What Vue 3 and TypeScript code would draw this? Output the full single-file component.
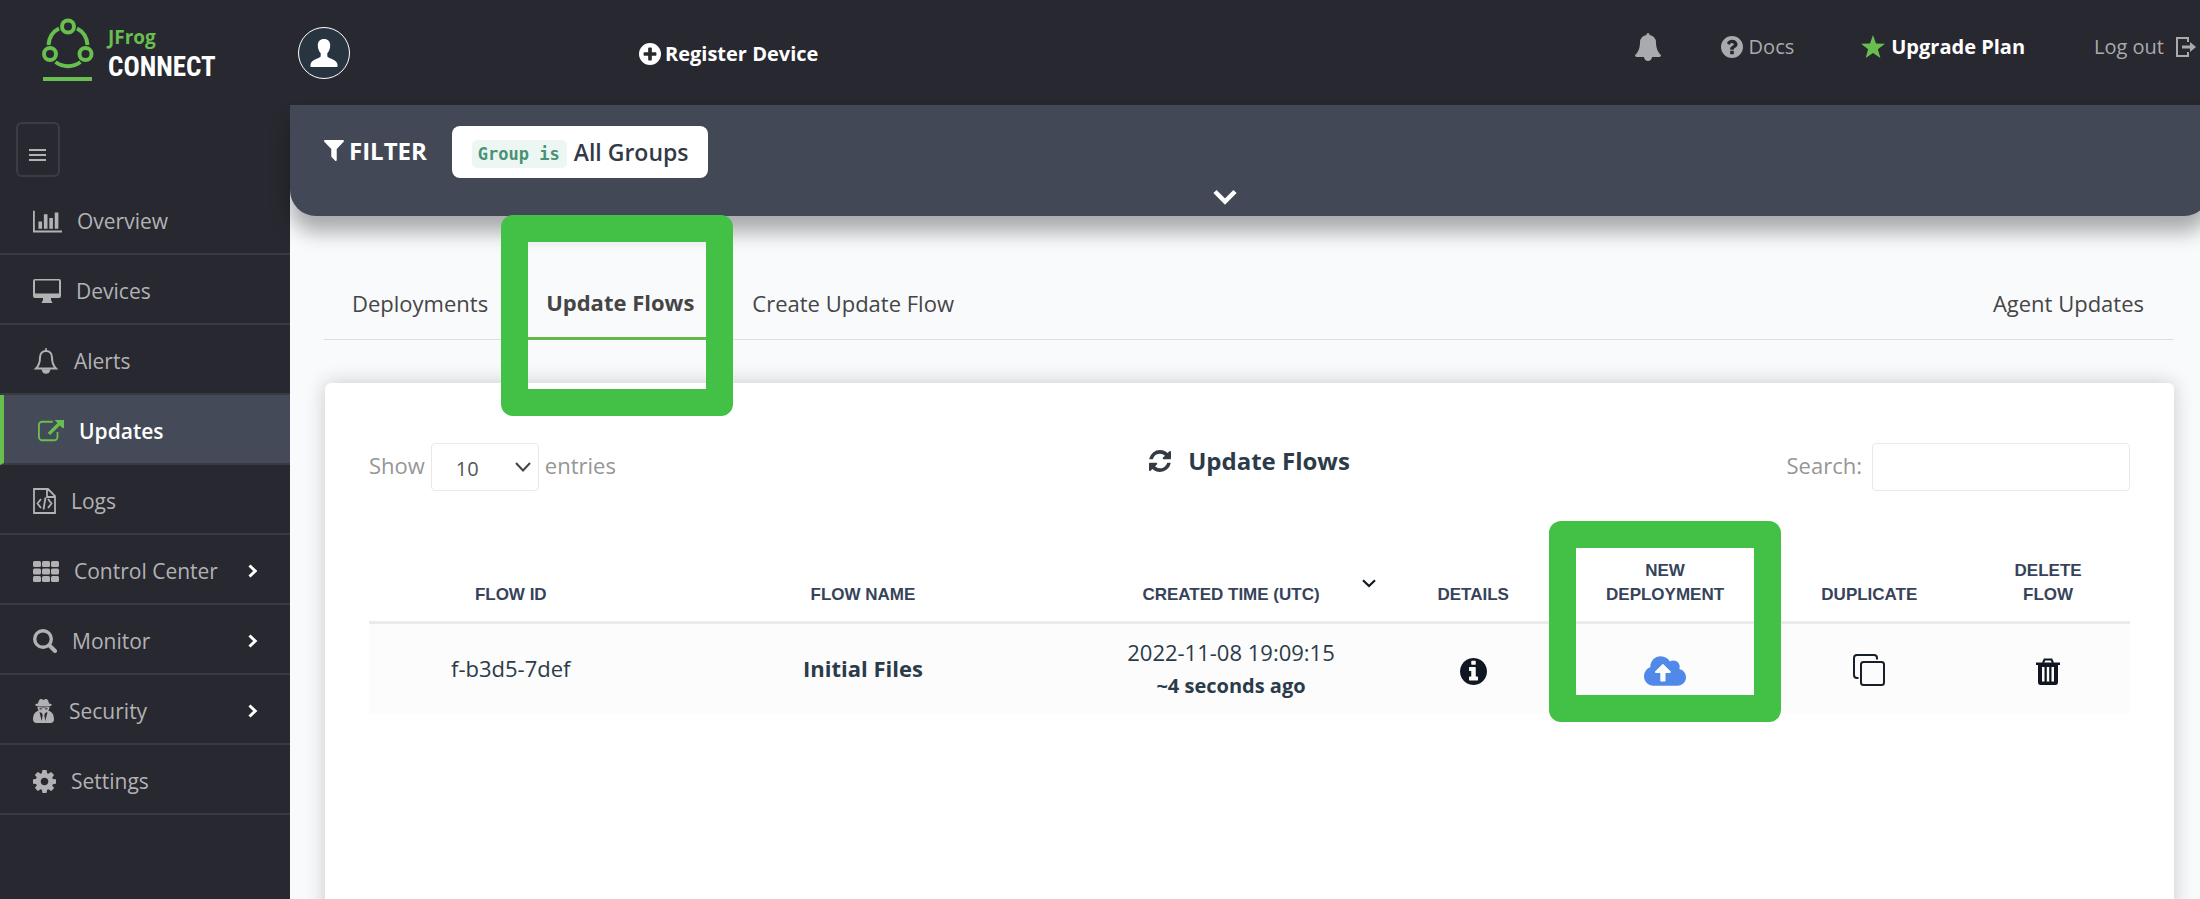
<script setup lang="ts">
import { ref } from 'vue'

interface NavItem {
  label: string
  icon: string
  expandable?: boolean
}

const navItems: NavItem[] = [
  { label: 'Overview', icon: 'chart' },
  { label: 'Devices', icon: 'desktop' },
  { label: 'Alerts', icon: 'bell' },
  { label: 'Updates', icon: 'external' },
  { label: 'Logs', icon: 'file' },
  { label: 'Control Center', icon: 'grid', expandable: true },
  { label: 'Monitor', icon: 'search', expandable: true },
  { label: 'Security', icon: 'agent', expandable: true },
  { label: 'Settings', icon: 'cog' },
]

const activeItem = ref('Updates')
const activeTab = ref('Update Flows')
const tabs = ['Deployments', 'Update Flows', 'Create Update Flow', 'Agent Updates']
const pageSize = ref('10')
const search = ref('')

const flows = [
  { id: 'f-b3d5-7def', name: 'Initial Files', created: '2022-11-08 19:09:15', ago: '~4 seconds ago' },
]
</script>

<template>
  <div class="page">
    <header class="topbar">
      <a class="brand" href="#" aria-label="JFrog Connect">
        <svg class="brand-mark" width="52" height="64" viewBox="0 0 52 64" fill="none" stroke="#68be4e" stroke-width="4">
          <circle cx="26" cy="8.500" r="6" />
          <circle cx="8" cy="36" r="6" />
          <circle cx="43.500" cy="36" r="6" />
          <path d="M6.500 27C7 19.500 11 13.500 17 10.500M45.500 27C45 19.500 41 13.500 35 10.500M13.500 44C21 49.500 31 49.500 38.500 44" />
          <path d="M1 61H50" />
        </svg>
        <span class="brand-text">
          <span class="brand-top">JFrog</span>
          <span class="brand-bottom">CONNECT</span>
        </span>
      </a>
      <button class="avatar" type="button" aria-label="Account">
        <svg width="28" height="28" viewBox="0 0 28 28" fill="#fff">
          <path d="M14 0C18 0 20.200 2.600 20.200 6.300C20.200 9.600 19 12.600 17.300 14.200V17.200C17.600 19.500 27.500 20 27.500 26V28H.500V26C.500 20 10.400 19.500 10.700 17.200V14.200C9 12.600 7.800 9.600 7.800 6.300C7.800 2.600 10 0 14 0Z" />
        </svg>
      </button>
      <a class="register" href="#">
        <svg width="22" height="22" viewBox="128 128 1536 1536">
          <path fill="currentColor" fill-rule="evenodd" d="M896 128a768 768 0 1 0 0 1536a768 768 0 1 0 0-1536zM1344 960v-128q0-26-19-45t-45-19h-256v-256q0-26-19-45t-45-19h-128q-26 0-45 19t-19 45v256h-256q-26 0-45 19t-19 45v128q0 26 19 45t45 19h256v256q0 26 19 45t45 19h128q26 0 45-19t19-45v-256h256q26 0 45-19t19-45z" />
        </svg>
        <span>Register Device</span>
      </a>
      <nav class="top-links" aria-label="Account links">
        <button class="bell" type="button" aria-label="Notifications">
          <svg width="26" height="28" viewBox="64 0 1664 1792" fill="currentColor">
            <path d="M1728 1408q0 52-38 90t-90 38h-448q0 106-75 181t-181 75-181-75-75-181h-448q-52 0-90-38t-38-90q50-42 91-88t85-119.500 74.500-158.500 50-206 19.500-260q0-152 117-282.500t307-158.500q-8-19-8-39 0-40 28-68t68-28 68 28 28 68q0 20-8 39 190 28 307 158.500t117 282.500q0 139 19.500 260t50 206 74.500 158.500 85 119.500 91 88z" />
          </svg>
        </button>
        <a class="docs" href="#">
          <svg width="22" height="22" viewBox="128 128 1536 1536">
            <path fill="currentColor" fill-rule="evenodd" d="M896 128a768 768 0 1 0 0 1536a768 768 0 1 0 0-1536zM1024 1376v-192q0-14-9-23t-23-9h-192q-14 0-23 9t-9 23v192q0 14 9 23t23 9h192q14 0 23-9t9-23zm256-672q0-88-55.500-163t-138.500-116-170-41q-243 0-371 213-15 24 8 42l132 100q7 6 19 6 16 0 25-12 53-68 86-92 34-24 86-24 48 0 85.500 26t37.500 59q0 38-20 61t-68 45q-63 28-115.500 86.500t-52.500 125.500v36q0 14 9 23t23 9h192q14 0 23-9t9-23q0-19 21.500-49.500t54.500-49.500q32-18 49-28.500t46-35 44.500-48 28-60.500 12.500-81z" />
          </svg>
          <span>Docs</span>
        </a>
        <a class="upgrade" href="#">
          <svg width="24" height="23" viewBox="0 0 24 23">
            <path fill="#68be4e" d="M12 0L15 8.500L24 8.800L16.900 14.300L19.400 23L12 18L4.600 23L7.100 14.300L0 8.800L9 8.500Z" />
          </svg>
          <span>Upgrade Plan</span>
        </a>
        <a class="logout" href="#">
          <span>Log out</span>
          <svg width="20" height="20" viewBox="0 0 20 20" fill="none" stroke="currentColor" stroke-width="2">
            <path d="M12 5V1H1V19H12V15" />
            <path d="M6 10H15" stroke-width="3" />
            <path fill="currentColor" stroke="none" d="M14 5L20 10L14 15Z" />
          </svg>
        </a>
      </nav>
    </header>

    <aside class="sidebar">
      <button class="menu-toggle" type="button" aria-label="Toggle menu">
        <svg width="18" height="12" viewBox="0 0 18 12" stroke="currentColor" stroke-width="2">
          <path d="M0 1H17M0 6H17M0 11H17" />
        </svg>
      </button>
      <nav aria-label="Main">
        <a
          v-for="item in navItems"
          :key="item.label"
          href="#"
          class="nav-item"
          :class="{ active: item.label === activeItem }"
          @click.prevent="activeItem = item.label"
        >
          <svg v-if="item.icon === 'chart'" width="29" height="23" viewBox="0 128 2048 1536" fill="currentColor">
            <path d="M640 896v512h-256v-512h256zm384-512v1024h-256v-1024h256zm1024 1152v128h-2048v-1536h128v1408h1920zm-640-896v768h-256v-768h256zm384-384v1152h-256v-1152h256z" />
          </svg>
          <svg v-else-if="item.icon === 'desktop'" width="28" height="24" viewBox="0 0 28 24">
            <path fill="currentColor" fill-rule="evenodd" d="M2 0H26Q28 0 28 2V17Q28 19 26 19H18V21L19.500 24H8.500L10 21V19H2Q0 19 0 17V2Q0 0 2 0ZM2 1.500V14.500H26V1.500Z" />
          </svg>
          <svg v-else-if="item.icon === 'bell'" width="26" height="26" viewBox="0 0 26 26" fill="none" stroke="currentColor" stroke-width="2">
            <path d="M3 20.500C6 17.500 7 14 7 9.500C7 5.500 9.500 3 13 3S19 5.500 19 9.500C19 14 20 17.500 23 20.500Z" />
            <path d="M13 0V3M9.500 22C10.500 26 15.500 26 16.500 22Z" fill="currentColor" stroke-width="1.500" />
          </svg>
          <svg v-else-if="item.icon === 'external'" width="26" height="22" viewBox="0 128 1792 1408" fill="currentColor">
            <path d="M1408 928v320q0 119-84.500 203.500t-203.500 84.500h-832q-119 0-203.500-84.500t-84.500-203.500v-832q0-119 84.500-203.500t203.500-84.500h704q14 0 23 9t9 23v64q0 14-9 23t-23 9h-704q-66 0-113 47t-47 113v832q0 66 47 113t113 47h832q66 0 113-47t47-113v-320q0-14 9-23t23-9h64q14 0 23 9t9 23zm384-784v432q0 26-19 45t-45 19-45-19l-176-176-652 652q-10 10-23 10t-23-10l-114-114q-10-10-10-23t10-23l652-652-176-176q-19-19-19-45t19-45 45-19h512q26 0 45 19t19 45z" />
          </svg>
          <svg v-else-if="item.icon === 'file'" width="23" height="26" viewBox="0 0 23 26" fill="none" stroke="currentColor" stroke-width="1.800">
            <path d="M1 1H15L22 8V25H1ZM14 1V9H22M8 11L4.500 15.500L8 20M15 11L18.500 15.500L15 20M12.500 9.500L10.500 21.500" />
          </svg>
          <svg v-else-if="item.icon === 'grid'" width="26" height="21" viewBox="0 0 26 21" fill="currentColor">
            <g v-for="row in 3" :key="row">
              <rect v-for="col in 3" :key="col" :x="(col - 1) * 9" :y="(row - 1) * 7.500" width="8" height="6" rx="1.500" />
            </g>
          </svg>
          <svg v-else-if="item.icon === 'search'" width="24" height="24" viewBox="0 0 24 24" fill="none" stroke="currentColor" stroke-linecap="round">
            <circle cx="10" cy="10" r="8.300" stroke-width="3.400" />
            <path d="M16.500 16.500L22 22" stroke-width="4" />
          </svg>
          <svg v-else-if="item.icon === 'agent'" width="21" height="24" viewBox="0 0 21 24" fill="currentColor">
            <path d="M5 4.500C5.500 1.500 6.500 0 8 0C9 0 9.500.800 10.500.800S12 0 13 0C14.500 0 15.500 1.500 16 4.500C18 4.800 18.800 5.300 18.800 5.900C18.800 6.900 15 7.600 10.500 7.600S2.200 6.900 2.200 5.900C2.200 5.300 3 4.800 5 4.500Z" />
            <path fill-rule="evenodd" d="M4.500 7.800Q10.500 9.300 16.500 7.800C16.500 9.500 16 10.800 15.300 11.500L16.500 12C20 13.500 21 17 21 20.500C21 22.500 19.500 24 17.500 24H3.500C1.500 24 0 22.500 0 20.500C0 17 1 13.500 4.500 12L5.700 11.500C5 10.800 4.500 9.500 4.500 7.800ZM6.300 9.200C6.500 11 8.500 11 9.500 9.600ZM14.700 9.200C14.500 11 12.500 11 11.500 9.600ZM6.500 13L8.700 22L9.700 16L8.800 14ZM14.500 13L12.300 22L11.300 16L12.200 14Z" />
          </svg>
          <svg v-else width="23" height="23" viewBox="128 128 1536 1536" fill="currentColor">
            <path d="M1152 896q0-106-75-181t-181-75-181 75-75 181 75 181 181 75 181-75 75-181zm512-109v222q0 12-8 23t-20 13l-185 28q-19 54-39 91 35 50 107 138 10 12 10 25t-9 23q-27 37-99 108t-94 71q-12 0-26-9l-138-108q-44 23-91 38-16 136-29 186-7 28-36 28h-222q-14 0-24.500-8.500t-11.500-21.500l-28-184q-49-16-90-37l-141 107q-10 9-25 9-14 0-25-11-126-114-165-168-7-10-7-23 0-12 8-23 15-21 51-66.500t54-70.500q-27-50-41-99l-183-27q-13-2-21-12.500t-8-23.500v-222q0-12 8-23t19-13l186-28q14-46 39-92-40-57-107-138-10-12-10-24 0-10 9-23 26-36 98.500-107.500t94.500-71.500q13 0 26 10l138 107q44-23 91-38 16-136 29-186 7-28 36-28h222q14 0 24.500 8.500t11.500 21.500l28 184q49 16 90 37l142-107q9-9 24-9 13 0 25 10 129 119 165 170 7 8 7 22 0 12-8 23-15 21-51 66.500t-54 70.500q26 50 41 98l183 28q13 2 21 12.500t8 23.500z" />
          </svg>
          <span>{{ item.label }}</span>
          <svg v-if="item.expandable" class="nav-arrow" width="10" height="14" viewBox="0 0 10 14" fill="none" stroke="#fff" stroke-width="3">
            <path d="M1.500 1.500L7.200 7L1.500 12.500" />
          </svg>
        </a>
      </nav>
    </aside>

    <main class="content">
      <section class="filter-bar" aria-label="Filter">
        <div class="filter-row">
          <span class="filter-title">
            <svg width="20" height="21" viewBox="190 256 1412 1408" fill="currentColor" preserveAspectRatio="none">
              <path d="M1595 295q17 41-14 70l-493 493v742q0 42-39 59-13 5-25 5-27 0-45-19l-256-256q-19-19-19-45v-486l-493-493q-31-29-14-70 17-39 59-39h1280q42 0 59 39z" />
            </svg>
            FILTER
          </span>
          <button class="filter-chip" type="button">
            <code>Group is</code>
            <span>All Groups</span>
          </button>
        </div>
        <button class="filter-expand" type="button" aria-label="Expand filter">
          <svg width="24" height="16" viewBox="0 0 24 16" fill="none" stroke="#fff" stroke-width="4.500">
            <path d="M2 2.500L12 12.500L22 2.500" />
          </svg>
        </button>
      </section>

      <nav class="tabs" aria-label="Updates">
        <a
          v-for="tab in tabs"
          :key="tab"
          href="#"
          class="tab"
          :class="{ active: tab === activeTab, last: tab === 'Agent Updates' }"
          @click.prevent="activeTab = tab"
        >
          {{ tab }}
          <span v-if="tab === 'Update Flows'" class="highlight tab-highlight" aria-hidden="true"></span>
        </a>
      </nav>

      <section class="card">
        <div class="toolbar">
          <label class="length">
            <span>Show</span>
            <span class="select-wrap">
              <select v-model="pageSize">
                <option>10</option>
                <option>25</option>
                <option>50</option>
              </select>
              <svg width="16" height="10" viewBox="0 0 16 10" fill="none" stroke="#444" stroke-width="2">
                <path d="M1 1L8 8.500L15 1" />
              </svg>
            </span>
            <span>entries</span>
          </label>
          <h1 class="card-title">
            <svg width="22" height="22" viewBox="128 128 1536 1536" fill="#333b45">
              <path d="M1639 1056q0 5-1 7-64 268-268 434.500t-478 166.500q-146 0-282.500-55t-243.500-157l-129 129q-19 19-45 19t-45-19-19-45v-448q0-26 19-45t45-19h448q26 0 45 19t19 45-19 45l-137 137q71 66 161 102t187 36q134 0 250-65t186-179q11-17 53-117 8-23 30-23h192q13 0 22.500 9.500t9.500 22.500zm25-800v448q0 26-19 45t-45 19h-448q-26 0-45-19t-19-45 19-45l138-138q-148-137-349-137-134 0-250 65t-186 179q-11 17-53 117-8 23-30 23h-199q-13 0-22.500-9.500t-9.500-22.500v-7q65-268 270-434.500t480-166.500q146 0 284 55.500t245 156.500l130-129q19-19 45-19t45 19 19 45z" />
            </svg>
            Update Flows
          </h1>
          <label class="search">
            <span>Search:</span>
            <input v-model="search" type="search" />
          </label>
        </div>

        <table class="flows">
          <colgroup>
            <col class="c-id" />
            <col class="c-name" />
            <col class="c-time" />
            <col class="c-details" />
            <col class="c-deploy" />
            <col class="c-dup" />
            <col class="c-del" />
          </colgroup>
          <thead>
            <tr>
              <th scope="col">FLOW ID</th>
              <th scope="col">FLOW NAME</th>
              <th scope="col">
                <span class="sortable">
                  CREATED TIME (UTC)
                  <svg width="14" height="9" viewBox="0 0 14 9" fill="none" stroke="#111820" stroke-width="2.200">
                    <path d="M1 1.200L7 7L13 1.200" />
                  </svg>
                </span>
              </th>
              <th scope="col">DETAILS</th>
              <th scope="col">
                <span class="deploy-head">
                  NEW<br />DEPLOYMENT
                  <span class="highlight deploy-highlight" aria-hidden="true"></span>
                </span>
              </th>
              <th scope="col">DUPLICATE</th>
              <th scope="col">DELETE<br />FLOW</th>
            </tr>
          </thead>
          <tbody>
            <tr v-for="flow in flows" :key="flow.id">
              <td>{{ flow.id }}</td>
              <td class="name">{{ flow.name }}</td>
              <td class="time">
                <div>{{ flow.created }}</div>
                <div class="ago">{{ flow.ago }}</div>
              </td>
              <td>
                <button class="action" type="button" aria-label="Details">
                  <svg width="27" height="27" viewBox="128 128 1536 1536" fill="#101722">
                    <path d="M1152 1376v-160q0-14-9-23t-23-9h-96v-512q0-14-9-23t-23-9h-320q-14 0-23 9t-9 23v160q0 14 9 23t23 9h96v320h-96q-14 0-23 9t-9 23v160q0 14 9 23t23 9h448q14 0 23-9t9-23zm-128-896v-160q0-14-9-23t-23-9h-192q-14 0-23 9t-9 23v160q0 14 9 23t23 9h192q14 0 23-9t9-23zm640 416q0 209-103 385.500t-279.500 279.500-385.500 103-385.500-103-279.500-279.500-103-385.500 103-385.500 279.500-279.500 385.500-103 385.500 103 279.500 279.500 103 385.500z" />
                  </svg>
                </button>
              </td>
              <td>
                <button class="action" type="button" aria-label="New deployment">
                  <svg width="42" height="30" viewBox="0 32 640 448" fill="#5189e9">
                    <path d="M537.600 226.600c4.100-10.700 6.400-22.400 6.400-34.600 0-53-43-96-96-96-19.700 0-38.100 6-53.300 16.200C367 64.200 315.300 32 256 32c-88.400 0-160 71.600-160 160 0 2.700.100 5.400.200 8.100C40.200 219.800 0 273.200 0 336c0 79.500 64.500 144 144 144h368c70.700 0 128-57.300 128-128 0-61.900-44-113.600-102.400-125.400zM393.400 288H328v112c0 8.800-7.200 16-16 16h-48c-8.800 0-16-7.200-16-16V288h-65.400c-14.300 0-21.400-17.200-11.300-27.300l105.400-105.400c6.200-6.200 16.400-6.200 22.600 0l105.400 105.400c10.100 10.100 2.900 27.300-11.300 27.300z" />
                  </svg>
                </button>
              </td>
              <td>
                <button class="action" type="button" aria-label="Duplicate">
                  <svg width="32" height="32" viewBox="0 0 32 32" fill="none" stroke="#16202a" stroke-width="2">
                    <path d="M5.500 24H4Q1 24 1 21V4Q1 1 4 1H21Q24 1 24 4V5.500" />
                    <rect x="8" y="8" width="23" height="23" rx="2.500" />
                  </svg>
                </button>
              </td>
              <td>
                <button class="action" type="button" aria-label="Delete flow">
                  <svg width="24" height="27" viewBox="0 0 24 27">
                    <path fill="none" stroke="#101722" stroke-width="2" d="M7 5L8.500 1.500H15.500L17 5" />
                    <path fill="#101722" fill-rule="evenodd" d="M0 4.500H24V7H22V24Q22 27 19.500 27H4.500Q2 27 2 24V7H0ZM6 9V23.500H8.500V9ZM10.800 9V23.500H13.200V9ZM15.500 9V23.500H18V9Z" />
                  </svg>
                </button>
              </td>
            </tr>
          </tbody>
        </table>
      </section>
    </main>
  </div>
</template>

<style>
body {
  margin: 0;
  overflow: hidden;
}
</style>

<style scoped>
.page {
  display: grid;
  grid-template: auto 1fr / 290px 1fr;
  min-height: 100vh;
  overflow: hidden;
  background: #f9fafc;
  color: #2b3b49;
  font-family: "Open Sans", "Noto Sans", sans-serif;
  font-size: 22px;
}

.page * {
  box-sizing: border-box;
}

svg {
  display: block;
  flex: none;
}

a {
  color: inherit;
  text-decoration: none;
}

button {
  padding: 0;
  border: 0;
  background: none;
  color: inherit;
  font: inherit;
  cursor: pointer;
}

.topbar {
  grid-column: 1 / -1;
  display: flex;
  align-items: center;
  height: 105px;
  padding: 0 4px 0 42px;
  background: #282830;
  color: #a9aaae;
  font-size: 20px;
}

.brand {
  display: flex;
  gap: 14px;
  width: 256px;
  padding-bottom: 2px;
}

.brand-text {
  display: flex;
  flex-direction: column;
  padding-top: 7px;
}

.brand-top {
  color: #68be4e;
  font-size: 19px;
  font-weight: 700;
  line-height: 24px;
}

.brand-bottom {
  color: #fff;
  font-family: "Roboto Condensed", "Open Sans Condensed", "Noto Sans Condensed", Roboto, sans-serif;
  font-size: 27px;
  font-weight: 700;
  line-height: 36px;
}

.avatar {
  display: flex;
  align-items: center;
  justify-content: center;
  width: 52px;
  height: 52px;
  border: 1px solid #fff;
  border-radius: 50%;
  background: #283541;
}

.register {
  display: flex;
  align-items: center;
  gap: 4px;
  margin-left: 289px;
  padding-top: 2px;
  color: #fff;
  font-weight: 700;
}

.top-links {
  display: flex;
  align-items: center;
  margin-left: auto;
  padding-bottom: 12px;
}

.docs,
.upgrade,
.logout {
  display: flex;
  align-items: center;
  gap: 6px;
}

.docs {
  margin-left: 60px;
}

.upgrade {
  margin-left: 67px;
  color: #fff;
  font-weight: 700;
}

.logout {
  gap: 12px;
  margin-left: 69px;
}

.sidebar {
  background: #282830;
  color: #b2b2b4;
  font-size: 21px;
  font-weight: 500;
}

.menu-toggle {
  display: flex;
  align-items: center;
  justify-content: center;
  width: 44px;
  height: 55px;
  margin: 17px 0 8px 16px;
  padding: 10px 0 0;
  border: 2px solid #3b3c44;
  border-radius: 6px;
}

.nav-item {
  display: flex;
  align-items: center;
  gap: 15px;
  height: 70px;
  padding: 4px 32px 0 33px;
  border-bottom: 2px solid #393a42;
}

.nav-item.active {
  padding-left: 34px;
  border-left: 4px solid #68be4e;
  background: #444a57;
  color: #fff;
  font-weight: 600;
}

.nav-item.active svg {
  color: #68be4e;
}

.nav-arrow {
  margin-left: auto;
}

.content {
  display: flex;
  flex-direction: column;
  min-width: 0;
}

.filter-bar {
  height: 111px;
  margin-right: -10px;
  border-radius: 0 0 26px 26px;
  background: #434856;
  box-shadow: 0 16px 20px rgba(0, 0, 0, 0.32);
}

.filter-row {
  display: flex;
  align-items: center;
  gap: 25px;
  padding: 21px 34px 0;
}

.filter-title {
  display: flex;
  align-items: center;
  gap: 5px;
  padding-bottom: 4px;
  color: #fff;
  font-size: 24px;
  font-weight: 700;
}

.filter-chip {
  display: flex;
  align-items: center;
  gap: 7px;
  height: 52px;
  padding: 0 19px 0 20px;
  border-radius: 8px;
  background: #fff;
  color: #333a47;
  font-size: 23px;
  font-weight: 600;
}

.filter-chip code {
  margin-top: 4px;
  padding: 4px 7px 4px 6px;
  border-radius: 5px;
  background: #ecf7f3;
  color: #4a9274;
  font-family: "DejaVu Sans Mono", monospace;
  font-size: 17px;
  font-weight: 700;
}

.filter-expand {
  display: flex;
  justify-content: center;
  width: 100%;
  padding: 11px 51px 0 0;
}

.tabs {
  display: flex;
  margin: 51px 26px 0 34px;
  border-bottom: 1px solid #dcdee0;
}

.tab {
  position: relative;
  display: flex;
  align-items: center;
  height: 73px;
  margin-bottom: -1px;
  padding: 2px 30px 0 28px;
  border-bottom: 3px solid transparent;
  color: #454545;
}

.tab.active {
  padding-top: 0;
  border-bottom-color: #63b84b;
  font-weight: 700;
}

.tab.last {
  margin-left: auto;
}

.highlight {
  position: absolute;
  left: 50%;
  width: 232px;
  height: 201px;
  margin-left: -116px;
  border: 27px solid #43c147;
  border-radius: 12px;
  pointer-events: none;
}

.tab-highlight {
  top: -52px;
  margin-left: -120px;
}

.card {
  flex: 1;
  margin: 43px 26px -20px 35px;
  padding: 60px 44px 0;
  border-radius: 6px;
  background: #fff;
  box-shadow: 0 0 20px rgba(0, 0, 0, 0.2);
}

.toolbar {
  display: grid;
  grid-template-columns: 1fr auto 1fr;
  align-items: start;
  color: #969696;
}

.length,
.search {
  display: flex;
  align-items: center;
  gap: 6px;
}

.length > span:not(.select-wrap),
.search > span {
  padding-bottom: 5px;
}

.search {
  justify-content: flex-end;
  gap: 10px;
}

.select-wrap {
  position: relative;
}

.select-wrap svg {
  position: absolute;
  top: 19px;
  right: 8px;
  pointer-events: none;
}

select,
input {
  height: 48px;
  border: 1px solid #e9e9e9;
  border-radius: 4px;
  background: #fff;
  color: #555;
  font: inherit;
}

select {
  width: 108px;
  padding: 2px 24px 0;
  appearance: none;
  font-size: 20px;
}

input {
  width: 258px;
  padding: 0 12px;
}

.card-title {
  display: flex;
  align-items: center;
  gap: 17px;
  margin: 0;
  color: #2b3b49;
  font-size: 24px;
  font-weight: 700;
  line-height: 36px;
}

.flows {
  width: 100%;
  margin-top: 54px;
  border-collapse: collapse;
  table-layout: fixed;
  text-align: center;
}

.c-id { width: 16.1%; }
.c-name { width: 23.9%; }
.c-time { width: 17.9%; }
.c-details { width: 9.6%; }
.c-deploy { width: 12.2%; }
.c-dup { width: 11%; }
.c-del { width: 9.3%; }

th {
  padding: 14px 0;
  border-bottom: 3px solid #ebebeb;
  color: #36435a;
  font-family: "Liberation Sans", Arial, sans-serif;
  font-size: 17px;
  font-weight: 700;
  line-height: 24px;
  vertical-align: bottom;
}

.sortable,
.deploy-head {
  position: relative;
  display: block;
}

.sortable svg {
  position: absolute;
  top: -4px;
  right: 13px;
}

.deploy-highlight {
  top: -38px;
}

td {
  height: 91px;
  padding: 0;
  background: #fcfcfc;
  line-height: 33px;
}

.name {
  font-weight: 700;
}

.ago {
  font-size: 20px;
  font-weight: 700;
}

.action {
  display: inline-flex;
  vertical-align: middle;
}
</style>
